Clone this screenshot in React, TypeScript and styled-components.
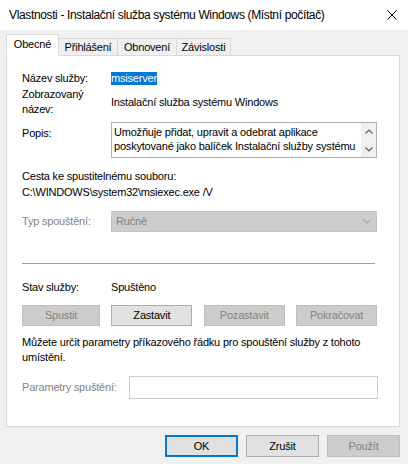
import React from 'react';
import styled, { createGlobalStyle } from 'styled-components';

const GlobalStyle = createGlobalStyle`
  html, body {
    margin: 0;
    padding: 0;
    background: #f0f0f0;
  }
  body {
    font-family: "Liberation Sans", Arial, sans-serif;
    font-size: 11px;
    letter-spacing: -0.2px;
    line-height: 15px;
    color: #000;
  }
`;

const Window = styled.div`
  width: 408px;
  height: 464px;
  display: flex;
  flex-direction: column;
  background: #f0f0f0;
  overflow: hidden;
`;

const TitleBar = styled.div`
  height: 30px;
  flex: none;
  display: flex;
  align-items: center;
  justify-content: space-between;
  padding: 0 11px 0 9px;
  background: #fff;
  font-size: 12px;
  letter-spacing: -0.36px;
`;

const TabStrip = styled.div`
  display: flex;
  align-items: flex-end;
  margin: 4px 0 0 6px;
  height: 21px;
  position: relative;
  z-index: 1;
`;

const Tab = styled.div<{ $active?: boolean; $width: number }>`
  box-sizing: border-box;
  width: ${(p) => p.$width}px;
  height: ${(p) => (p.$active ? '22px' : '17px')};
  padding-top: ${(p) => (p.$active ? '2px' : '1px')};
  margin-bottom: ${(p) => (p.$active ? '-1px' : '0')};
  border: 1px solid #d9d9d9;
  border-bottom: ${(p) => (p.$active ? '1px solid #fff' : 'none')};
  border-left: ${(p) => (p.$active ? '1px solid #d9d9d9' : 'none')};
  background: ${(p) => (p.$active ? '#fff' : '#f0f0f0')};
  text-align: center;
  white-space: nowrap;
`;

const Panel = styled.div`
  box-sizing: border-box;
  height: 372px;
  margin: 0 8px 0 6px;
  border: 1px solid #d9d9d9;
  background: #fff;
  padding: 15px 15px 0;
  display: flex;
  flex-direction: column;
`;

const FieldRow = styled.div<{ $gap?: number; $align?: string }>`
  display: grid;
  grid-template-columns: 89px 1fr;
  align-items: ${(p) => p.$align ?? 'start'};
  margin-top: ${(p) => p.$gap ?? 0}px;
`;

const Label = styled.div<{ $disabled?: boolean; $offset?: number }>`
  color: ${(p) => (p.$disabled ? '#838383' : '#000')};
  margin-top: ${(p) => p.$offset ?? 0}px;
  white-space: nowrap;
`;

const Selected = styled.span`
  display: inline-block;
  background: #0078d7;
  color: #fff;
  line-height: 13px;
  height: 13px;
  margin-top: 1px;
`;

const TextBox = styled.div`
  box-sizing: border-box;
  height: 36px;
  width: 266px;
  border: 1px solid #adadad;
  display: flex;
  overflow: hidden;
`;

const TextLines = styled.div`
  flex: 1;
  padding: 2px 0 0 2px;
  line-height: 14px;
  white-space: nowrap;
  overflow: hidden;
`;

const ScrollBar = styled.div`
  width: 15px;
  flex: none;
  background: #f0f0f0;
  display: flex;
  flex-direction: column;
  justify-content: space-between;
  align-items: center;
  padding: 6px 0 5px;
`;

const Block = styled.div<{ $gap?: number }>`
  margin-top: ${(p) => p.$gap ?? 0}px;
  line-height: 16px;
  white-space: nowrap;
`;

const Combo = styled.div`
  box-sizing: border-box;
  height: 21px;
  width: 266px;
  background: #cccccc;
  border: 1px solid #c4c4c4;
  color: #838383;
  display: flex;
  align-items: center;
  justify-content: space-between;
  padding: 0 5px 0 4px;
`;

const Separator = styled.div<{ $gap?: number }>`
  height: 1px;
  width: 353px;
  background: #a0a0a0;
  margin-top: ${(p) => p.$gap ?? 0}px;
`;

const ButtonRow = styled.div<{ $gap?: number }>`
  display: flex;
  justify-content: space-between;
  width: 355px;
  margin-top: ${(p) => p.$gap ?? 0}px;
`;

const Button = styled.div<{ $disabled?: boolean; $default?: boolean; $width?: number; $height?: number }>`
  box-sizing: border-box;
  width: ${(p) => p.$width ?? 81}px;
  height: ${(p) => p.$height ?? 21}px;
  display: flex;
  align-items: center;
  justify-content: center;
  background: ${(p) => (p.$disabled ? '#cccccc' : '#e1e1e1')};
  border: ${(p) =>
    p.$default ? '2px solid #0078d7' : p.$disabled ? '1px solid #bfbfbf' : '1px solid #adadad'};
  color: ${(p) => (p.$disabled ? '#838383' : '#000')};
`;

const Paragraph = styled.div<{ $gap?: number }>`
  margin-top: ${(p) => p.$gap ?? 0}px;
  line-height: 15px;
  white-space: nowrap;
`;

const ParamRow = styled.div<{ $gap?: number }>`
  display: grid;
  grid-template-columns: 107px 1fr;
  align-items: center;
  margin-top: ${(p) => p.$gap ?? 0}px;
`;

const Input = styled.div`
  box-sizing: border-box;
  height: 23px;
  width: 249px;
  border: 1px solid #cccccc;
  background: #fff;
`;

const Footer = styled.div`
  display: flex;
  justify-content: flex-end;
  gap: 8px;
  padding: 8px 8px 0 0;
`;

const Chevron = ({ up, color }: { up?: boolean; color: string }) => (
  <svg width="8" height="5" viewBox="0 0 8 5">
    <path
      d={up ? 'M0.5 4.5 L4 1 L7.5 4.5' : 'M0.5 0.5 L4 4 L7.5 0.5'}
      fill="none"
      stroke={color}
      strokeWidth="1.2"
    />
  </svg>
);

function App() {
  return (
    <>
      <GlobalStyle />
      <Window>
        <TitleBar>
          <span>Vlastnosti - Instalační služba systému Windows (Místní počítač)</span>
          <svg width="10" height="10" viewBox="0 0 10 10">
            <path d="M0.5 0.5 L9.5 9.5 M9.5 0.5 L0.5 9.5" stroke="#000" strokeWidth="1" />
          </svg>
        </TitleBar>

        <TabStrip>
          <Tab $active $width={53}>Obecné</Tab>
          <Tab $width={59}>Přihlášení</Tab>
          <Tab $width={59}>Obnovení</Tab>
          <Tab $width={54}>Závislosti</Tab>
        </TabStrip>

        <Panel>
          <FieldRow>
            <Label>Název služby:</Label>
            <div>
              <Selected>msiserver</Selected>
            </div>
          </FieldRow>

          <FieldRow $gap={1} $align="center">
            <Label>
              Zobrazovaný
              <br />
              název:
            </Label>
            <div>Instalační služba systému Windows</div>
          </FieldRow>

          <FieldRow $gap={5}>
            <Label $offset={4}>Popis:</Label>
            <TextBox>
              <TextLines>
                <div>Umožňuje přidat, upravit a odebrat aplikace</div>
                <div>poskytované jako balíček Instalační služby systému</div>
              </TextLines>
              <ScrollBar>
                <Chevron up color="#606060" />
                <Chevron color="#606060" />
              </ScrollBar>
            </TextBox>
          </FieldRow>

          <Block $gap={10}>
            <div>Cesta ke spustitelnému souboru:</div>
            <div>C:\WINDOWS\system32\msiexec.exe /V</div>
          </Block>

          <FieldRow $gap={11} $align="center">
            <Label $disabled>Typ spouštění:</Label>
            <Combo>
              <span>Ručně</span>
              <Chevron color="#a6a6a6" />
            </Combo>
          </FieldRow>

          <Separator $gap={31} />

          <FieldRow $gap={16}>
            <Label>Stav služby:</Label>
            <div>Spuštěno</div>
          </FieldRow>

          <ButtonRow $gap={10}>
            <Button $disabled $width={78}>Spustit</Button>
            <Button>Zastavit</Button>
            <Button $disabled>Pozastavit</Button>
            <Button $disabled>Pokračovat</Button>
          </ButtonRow>

          <Paragraph $gap={9}>
            Můžete určit parametry příkazového řádku pro spouštění služby z tohoto
            <br />
            umístění.
          </Paragraph>

          <ParamRow $gap={11}>
            <Label $disabled>Parametry spuštění:</Label>
            <Input />
          </ParamRow>
        </Panel>

        <Footer>
          <Button $default $width={73} $height={22}>OK</Button>
          <Button $width={73} $height={22}>Zrušit</Button>
          <Button $disabled $width={73} $height={22}>Použít</Button>
        </Footer>
      </Window>
    </>
  );
}

export default App;
